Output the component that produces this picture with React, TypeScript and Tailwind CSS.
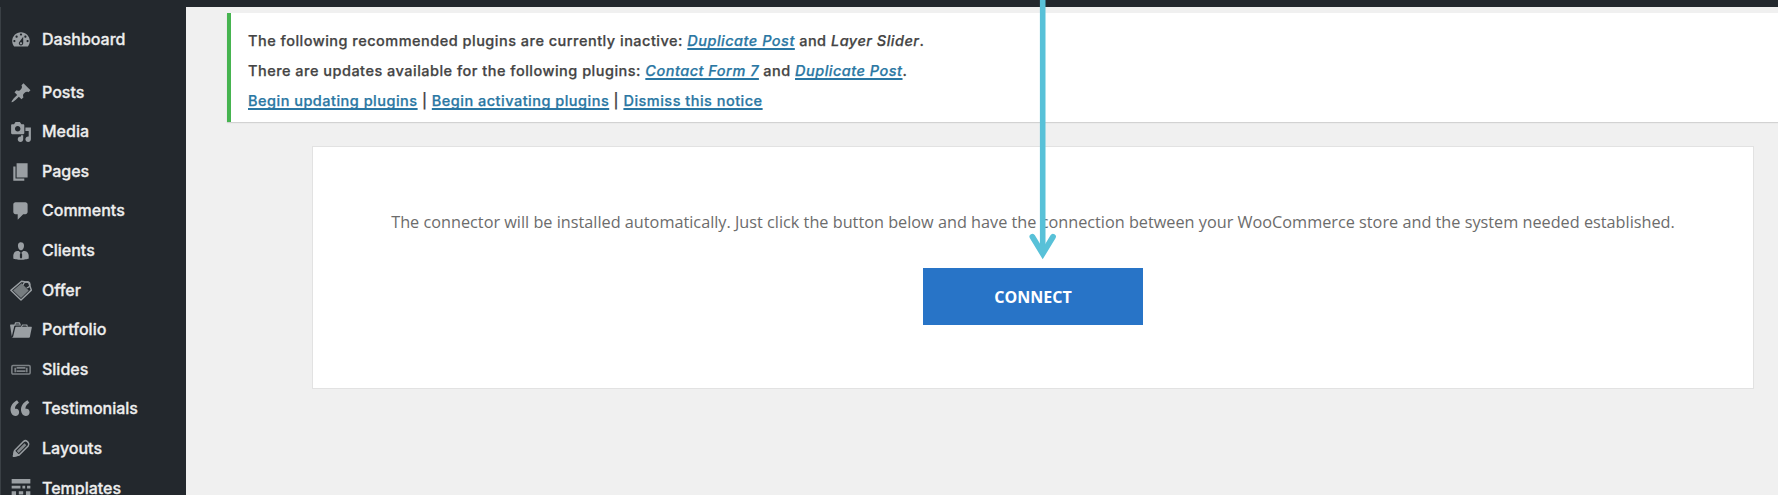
import React from "react";

const icons: Record<string, React.ReactNode> = {
  dashboard: (
    <path d="M3.76 16h12.48c1.1-1.37 1.76-3.11 1.76-5 0-4.42-3.58-8-8-8s-8 3.58-8 8c0 1.89.66 3.63 1.76 5zM10 4c.55 0 1 .45 1 1s-.45 1-1 1-1-.45-1-1 .45-1 1-1zM6 6c.55 0 1 .45 1 1s-.45 1-1 1-1-.45-1-1 .45-1 1-1zm8 0c.55 0 1 .45 1 1s-.45 1-1 1-1-.45-1-1 .45-1 1-1zm-5.37 5.55L12 7v6c0 1.1-.9 2-2 2s-2-.9-2-2c0-.57.24-1.08.63-1.45zM4 10c.55 0 1 .45 1 1s-.45 1-1 1-1-.45-1-1 .45-1 1-1zm12 0c.55 0 1 .45 1 1s-.45 1-1 1-1-.45-1-1 .45-1 1-1zm-5 3c0-.55-.45-1-1-1s-1 .45-1 1 .45 1 1 1 1-.45 1-1z" />
  ),
  posts: (
    <path d="M10.44 3.02l1.82-1.82 6.36 6.35-1.83 1.82c-1.05-.68-2.48-.57-3.41.36l-.75.75c-.92.93-1.04 2.35-.35 3.41l-1.83 1.82-2.41-2.41-2.8 2.79c-.42.42-3.38 2.71-3.8 2.29s1.86-3.39 2.28-3.81l2.79-2.79L4.1 9.36l1.83-1.82c1.05.69 2.48.57 3.4-.36l.75-.75c.93-.92 1.05-2.35.36-3.41z" />
  ),
  media: (
    <path d="M13 11V4c0-.55-.45-1-1-1h-1.67L9 1H5L3.67 3H2c-.55 0-1 .45-1 1v7c0 .55.45 1 1 1h10c.55 0 1-.45 1-1zM7 4.5c1.38 0 2.5 1.12 2.5 2.5S8.38 9.5 7 9.5 4.5 8.38 4.5 7 5.62 4.5 7 4.5zM14 6h5v10.5c0 1.38-1.12 2.5-2.5 2.5S14 17.88 14 16.5s1.12-2.5 2.5-2.5c.17 0 .34.02.5.05V9h-3V6zm-4 8.05V13h2v3.5c0 1.38-1.12 2.5-2.5 2.5S7 17.88 7 16.5 8.12 14 9.5 14c.17 0 .34.02.5.05z" />
  ),
  pages: <path d="M6 15V2h10v13H6zm-1 1h8v2H3V5h2v11z" />,
  comments: (
    <path d="M5 2h9c1.1 0 2 .9 2 2v7c0 1.1-.9 2-2 2h-2l-5 5v-5H5c-1.1 0-2-.9-2-2V4c0-1.1.9-2 2-2z" />
  ),
  clients: (
    <path d="M7.3 6l-.03-.19c-.04-.37-.05-.73-.03-1.08.02-.36.1-.71.25-1.04.14-.32.31-.61.52-.86s.49-.46.83-.6c.34-.15.72-.23 1.13-.23.69 0 1.26.2 1.71.59s.76.87.91 1.44.18 1.16.09 1.78l-.03.19c-.01.09-.05.25-.11.48-.05.24-.12.47-.2.69-.08.21-.19.45-.34.72-.14.27-.3.49-.47.69-.18.19-.4.34-.67.48-.27.13-.55.19-.86.19s-.59-.06-.87-.19c-.26-.13-.49-.29-.67-.5-.18-.2-.34-.42-.49-.66-.15-.25-.26-.49-.34-.73-.09-.25-.16-.47-.21-.67-.06-.21-.1-.37-.12-.5zm9.2 6.24c.41.7.5 1.41.5 2.14v2.49c0 .03-.12.08-.29.13-.18.04-.42.13-.97.27-.55.12-1.1.24-1.65.34s-1.19.19-1.95.27c-.75.08-1.46.12-2.13.12-.68 0-1.39-.04-2.14-.12-.75-.07-1.4-.17-1.98-.27-.58-.11-1.08-.23-1.56-.34-.49-.11-.8-.21-1.06-.29L3 16.87v-2.49c0-.75.07-1.46.46-2.15s.81-1.25 1.5-1.68C5.66 10.12 7.19 10 8 10l1.67 1.67L9 13v3l1.02 1.08L11 16v-3l-.68-1.33L11.97 10c.77 0 2.2.07 2.9.52.71.45 1.21 1.02 1.63 1.72z" />
  ),
  offer: (
    <>
      <path d="M10.500 1.200 0.800 9.400 10 18.200 19.400 9.200 17 2.200z" fill="none" stroke="currentColor" strokeWidth="1.300" strokeLinejoin="round" />
      <path d="M10.500 3 2.800 9.500 10 16.400 17 9.600z" opacity=".7" />
      <path d="M11.800 4.800c.4-3 4.800-4.300 6-2.200s-.4 4.100-2.600 4.600" fill="none" stroke="currentColor" strokeWidth="1.200" />
    </>
  ),
  portfolio: (
    <path d="M4 5H.78c-.37 0-.74.32-.69.84l1.56 9.99S3.5 8.47 3.86 6.7c.11-.53.61-.7.98-.7H10s-.7-2.08-.77-2.31C9.11 3.25 8.89 3 8.45 3H5.14c-.36 0-.7.23-.8.64C4.25 4.04 4 5 4 5zm4.88 0h-4s.42-1 .87-1h2.13c.48 0 1 1 1 1zM2.67 16.25c-.31.47-.76.75-1.26.75h15.73c.54 0 .92-.31 1.03-.83.44-2.19 1.68-8.44 1.68-8.44.07-.5-.3-.73-.62-.73H16V5.53c0-.16-.26-.53-.66-.53h-3.76c-.52 0-.87.58-.87.58L10 7H5.59c-.32 0-.63.19-.69.5 0 0-1.59 6.7-1.72 7.33-.07.37-.22.99-.51 1.42zM15.38 7H11s.58-1 1.13-1h2.29c.71 0 .96 1 .96 1z" />
  ),
  slides: (
    <g fill="none" stroke="currentColor" opacity=".75">
      <rect x="1.700" y="6" width="16.600" height="7.600" rx="1" strokeWidth="1.400" />
      <path d="M4.800 8v4M15.200 8v4M6 8h8M6 11h8" strokeWidth="1.600" />
    </g>
  ),
  testimonials: (
    <path transform="translate(-2.900 -2.600) scale(1.180)" d="M9.49 13.22c0-.74-.2-1.38-.61-1.9-.62-.78-1.83-.88-2.53-.72-.29-1.65 1.11-3.75 2.92-4.65L7.88 4c-2.73 1.3-5.42 4.28-4.96 8.05C3.21 14.43 4.59 16 6.54 16c.85 0 1.56-.25 2.12-.75s.83-1.18.83-2.03zm8.05 0c0-.74-.2-1.38-.61-1.9-.63-.78-1.83-.88-2.53-.72-.29-1.65 1.11-3.75 2.92-4.65L15.93 4c-2.73 1.3-5.41 4.28-4.95 8.05.29 2.38 1.66 3.95 3.61 3.95.85 0 1.56-.25 2.12-.75s.83-1.18.83-2.03z" />
  ),
  layouts: (
    <g fill="none" stroke="currentColor" strokeWidth="1.400" strokeLinejoin="round">
      <path d="M3.200 16.500 4.200 11.300 12.500 3Q14 1.800 15.500 3L16.600 4.200Q17.800 5.700 16.500 7.200L8.300 15.500z" />
      <path d="M7 12.700 14 5.700" strokeWidth="2.400" opacity=".8" />
      <path d="M3.200 16.500 4.200 12 7.700 15.500z" fill="currentColor" />
    </g>
  ),
  templates: (
    <path d="M1.500 1h17v4h-17zM1.500 7h8v2.500h-8zM11.300 7h2.500v2.500h-2.500zM15.500 7h3v2.500h-3zM1.500 12h4v5h-4zM8 12h4v3H8zM14.500 12h4v5h-4z" />
  ),
};

const menu = [
  { id: "posts", label: "Posts" },
  { id: "media", label: "Media" },
  { id: "pages", label: "Pages" },
  { id: "comments", label: "Comments" },
  { id: "clients", label: "Clients" },
  { id: "offer", label: "Offer" },
  { id: "portfolio", label: "Portfolio" },
  { id: "slides", label: "Slides" },
  { id: "testimonials", label: "Testimonials" },
  { id: "layouts", label: "Layouts" },
  { id: "templates", label: "Templates" },
];

function MenuItem({ id, label }: { id: string; label: string }) {
  return (
    <a className="flex h-[39.6px] shrink-0 items-center gap-[10px] pl-[9px] text-[16px] font-medium text-[#eeeeee]">
      <svg viewBox="0 0 20 20" className="mt-[2px] size-[22px] shrink-0 text-[#9a9fa3]" fill="currentColor">
        {icons[id]}
      </svg>
      <span className="[-webkit-text-stroke:0.3px_#eeeeee]">{label}</span>
    </a>
  );
}

function Link({ children }: { children: React.ReactNode }) {
  return (
    <a className="text-[#2a77a3] underline decoration-[1.500px] underline-offset-[2px] [text-decoration-skip-ink:none]">
      {children}
    </a>
  );
}

export default function App() {
  return (
    <div className="relative flex h-[495px] w-[1778px] flex-col overflow-hidden bg-[#f0f0f0] font-['Inter',sans-serif]">
      <header className="h-[7px] shrink-0 bg-[#23282d]" />
      <div className="flex min-h-0 flex-1">
        <aside className="flex w-[186px] shrink-0 flex-col overflow-hidden border-l border-[#3a4045] bg-[#23282d] pt-[12.500px]">
          <MenuItem id="dashboard" label="Dashboard" />
          <nav className="mt-[12.700px] flex flex-col">
            {menu.map((m) => (
              <MenuItem key={m.id} {...m} />
            ))}
          </nav>
        </aside>
        <main className="flex min-w-0 flex-1 flex-col pt-[6px] pl-[41px]">
          <section className="flex h-[109px] flex-col border-l-4 border-[#46b450] bg-white pt-[13px] pl-[17px] text-[14.500px] font-medium tracking-[0.49px] whitespace-nowrap text-[#444444] shadow-[0_1px_1px_rgba(0,0,0,0.12)] [-webkit-text-stroke:0.25px_currentColor]">
            <p className="h-[30px] leading-[30px]">
              The following recommended plugins are currently inactive:{" "}
              <em><Link>Duplicate Post</Link></em> and <em>Layer Slider</em>.
            </p>
            <p className="h-[30px] leading-[30px]">
              There are updates available for the following plugins:{" "}
              <em><Link>Contact Form 7</Link></em> and <em><Link>Duplicate Post</Link></em>.
            </p>
            <p className="h-[30px] leading-[30px]">
              <Link>Begin updating plugins</Link> | <Link>Begin activating plugins</Link> | <Link>Dismiss this notice</Link>
            </p>
          </section>
          <section className="mt-[24px] ml-[85px] flex h-[243px] w-[1442px] flex-col items-center border border-[#e2e2e2] bg-white pt-[60px] font-['Open_Sans',sans-serif]">
            <p className="h-[30px] text-[16.250px] leading-[30px] whitespace-nowrap text-[#6c6c6c]">
              The connector will be installed automatically. Just click the button below and have the connection between your WooCommerce store and the system needed established.
            </p>
            <button className="mt-[31px] h-[57px] w-[220px] bg-[#2874c7] text-[16px] font-bold text-white">
              CONNECT
            </button>
          </section>
        </main>
      </div>
      <svg className="absolute top-0 left-[1022px] h-[270px] w-[42px]" viewBox="0 0 42 270" fill="none">
        <path d="M20.700 0V253.500" stroke="#58c1d8" strokeWidth="5.600" />
        <path d="M10.400 236.700 20.700 253.700 31 236.700" stroke="#58c1d8" strokeWidth="5.800" strokeLinecap="round" strokeLinejoin="miter" />
      </svg>
    </div>
  );
}
